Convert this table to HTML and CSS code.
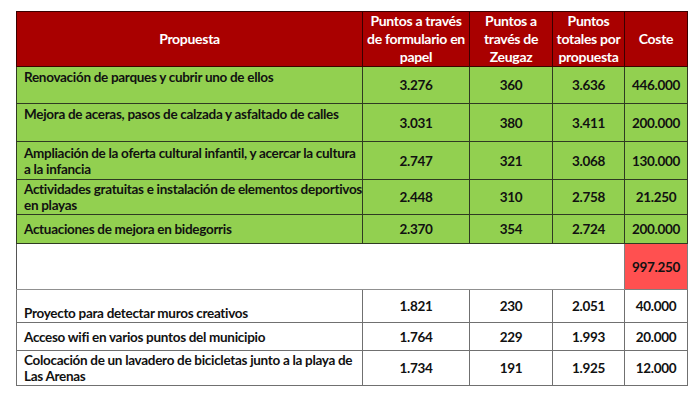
FILE: index.html
```html
<!DOCTYPE html>
<html>
<head>
<meta charset="utf-8">
<link rel="stylesheet" href="styles.css">
</head>
<body>
<div class="wrap">
<table class="sheet">
  <colgroup>
    <col class="c1"><col class="c2"><col class="c3"><col class="c4"><col class="c5">
  </colgroup>
  <thead>
    <tr class="h">
      <th>Propuesta</th>
      <th>Puntos a través<br>de formulario en<br>papel</th>
      <th>Puntos a<br>través de<br>Zeugaz</th>
      <th>Puntos<br>totales por<br>propuesta</th>
      <th>Coste</th>
    </tr>
  </thead>
  <tbody>
    <tr class="g r1"><td class="t top">Renovación de parques y cubrir uno de ellos</td><td>3.276</td><td>360</td><td>3.636</td><td>446.000</td></tr>
    <tr class="g r2"><td class="t top">Mejora de aceras, pasos de calzada y asfaltado de calles</td><td>3.031</td><td>380</td><td>3.411</td><td>200.000</td></tr>
    <tr class="g r3"><td class="t">Ampliación de la oferta cultural infantil, y acercar la cultura<br>a la infancia</td><td>2.747</td><td>321</td><td>3.068</td><td>130.000</td></tr>
    <tr class="g r4"><td class="t">Actividades gratuitas e instalación de elementos deportivos<br>en playas</td><td>2.448</td><td>310</td><td>2.758</td><td>21.250</td></tr>
    <tr class="g r5"><td class="t">Actuaciones de mejora en bidegorris</td><td>2.370</td><td>354</td><td>2.724</td><td>200.000</td></tr>
    <tr class="gap"><td class="blank" colspan="4"></td><td class="total">997.250</td></tr>
    <tr class="w r6"><td class="t bot">Proyecto para detectar muros creativos</td><td>1.821</td><td>230</td><td>2.051</td><td>40.000</td></tr>
    <tr class="w r7"><td class="t">Acceso wifi en varios puntos del municipio</td><td>1.764</td><td>229</td><td>1.993</td><td>20.000</td></tr>
    <tr class="w r8"><td class="t">Colocación de un lavadero de bicicletas junto a la playa de<br>Las Arenas</td><td>1.734</td><td>191</td><td>1.925</td><td>12.000</td></tr>
  </tbody>
</table>
</div>
</body>
</html>
```
FILE: styles.css
```css
html, body {
  margin: 0;
  padding: 0;
  background: #ffffff;
}
.wrap {
  padding: 11px 0 0 16px;
}
.sheet {
  border-collapse: collapse;
  table-layout: fixed;
  width: 671px;
  font-family: Lato, "Liberation Sans", sans-serif;
  font-weight: 700;
  font-size: 13.5px;
  letter-spacing: -0.3px;
  color: #111;
}
.c1 { width: 346px; }
.c2 { width: 107px; }
.c3 { width: 83px; }
.c4 { width: 72px; }
.c5 { width: 63px; }

.h th {
  height: 53px;
  padding: 0 2px;
  color: #ffffff;
  font-size: 14px;
  letter-spacing: -0.3px;
  line-height: 18px;
  text-align: center;
  vertical-align: middle;
  border: 1px solid #3a0000;
  background-color: #a80000;
  background-image: repeating-conic-gradient(#c80000 0 25%, #8a0000 0 50%);
  background-size: 2px 2px;
}
td {
  padding: 0 4px;
  text-align: center;
  vertical-align: middle;
  line-height: 16px;
  white-space: nowrap;
}
td.t {
  text-align: left;
  padding: 0 0 0 7px;
  overflow: hidden;
}
td.top { vertical-align: top; padding-top: 2px; }
td.bot { vertical-align: bottom; padding-bottom: 1px; }

.g td {
  background: #92d050;
  border: 1px solid #2f3a22;
}
.w td {
  background: #ffffff;
  border: 1px solid #707070;
}
.r1 td { height: 34px; }
.r2 td { height: 35px; }
.r3 td { height: 37px; }
.r4 td { height: 34px; }
.r5 td { height: 28px; }
.gap td { height: 45px; }
.r6 td { height: 31px; }
.r7 td { height: 27px; }
.r8 td { height: 34px; }

td.blank {
  background: #ffffff;
  border-left: 1px solid #555;
  border-bottom: 1px solid #909090;
}
td.total {
  background: #ff5050;
  border: 1px solid #808080;
  border-top-color: #2f3a22;
}
```
